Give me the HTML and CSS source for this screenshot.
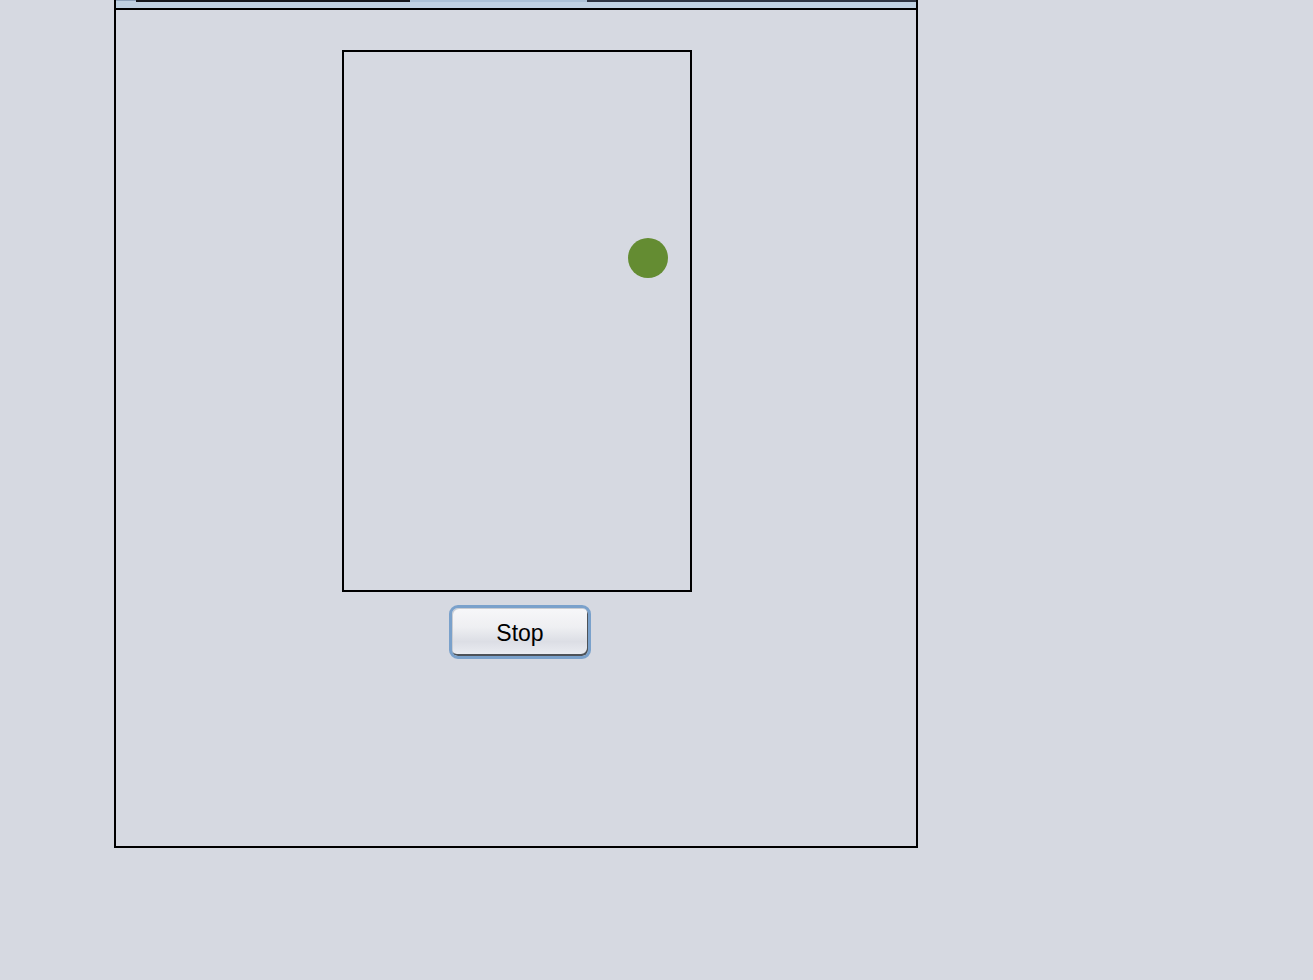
FILE: index.html
```html
<!DOCTYPE html>
<html>
<head>
<meta charset="utf-8">
<link rel="stylesheet" href="styles.css">
</head>
<body>
<div class="frame">
  <div class="header">
    <div class="seg seg-a"></div>
    <div class="seg seg-b"></div>
    <div class="seg seg-tab"></div>
    <div class="seg seg-c"></div>
  </div>
  <div class="content">
    <div class="canvas">
      <div class="ball"></div>
    </div>
    <button class="btn">Stop</button>
  </div>
</div>
</body>
</html>
```
FILE: styles.css
```css
html, body {
  margin: 0;
  padding: 0;
  background: #d6d9e1;
  font-family: "Liberation Sans", Arial, sans-serif;
}
.frame {
  margin-left: 114px;
  width: 800px;
  height: 846px;
  border-left: 2px solid #000;
  border-right: 2px solid #000;
  border-bottom: 2px solid #000;
  display: flex;
  flex-direction: column;
}
.header {
  height: 8px;
  background: #c0d1e2;
  border-bottom: 2px solid #000;
  display: flex;
  align-items: flex-start;
}
.seg {
  height: 2px;
}
.seg-a {
  width: 20px;
  height: 1px;
  background: #8fa3bb;
}
.seg-b {
  width: 274px;
  background: #14161c;
}
.seg-tab {
  width: 177px;
  background: #acc1d6;
}
.seg-c {
  flex: 1;
  background: #2c3240;
}
.content {
  flex: 1;
  display: flex;
  flex-direction: column;
  align-items: flex-start;
  padding-top: 40px;
}
.canvas {
  margin-left: 226px;
  width: 346px;
  height: 538px;
  border: 2px solid #000;
  position: relative;
}
.ball {
  position: absolute;
  left: 284px;
  top: 186px;
  width: 40px;
  height: 40px;
  border-radius: 50%;
  background: #648c32;
}
.btn {
  margin-top: 13px;
  margin-left: 333px;
  width: 142px;
  height: 54px;
  box-sizing: border-box;
  border: 3px solid #7aa1cb;
  border-radius: 9px;
  padding: 0;
  background: linear-gradient(to bottom, #f7f7f9 0%, #eeeff2 40%, #dcdee5 70%, #eceef3 100%);
  box-shadow: inset -1px -2px 0 #4d5258, inset 1px 1px 0 #c9ccd2;
  font-family: "Liberation Sans", Arial, sans-serif;
  font-size: 23px;
  color: #000;
  text-align: center;
  line-height: 50px;
}
```
